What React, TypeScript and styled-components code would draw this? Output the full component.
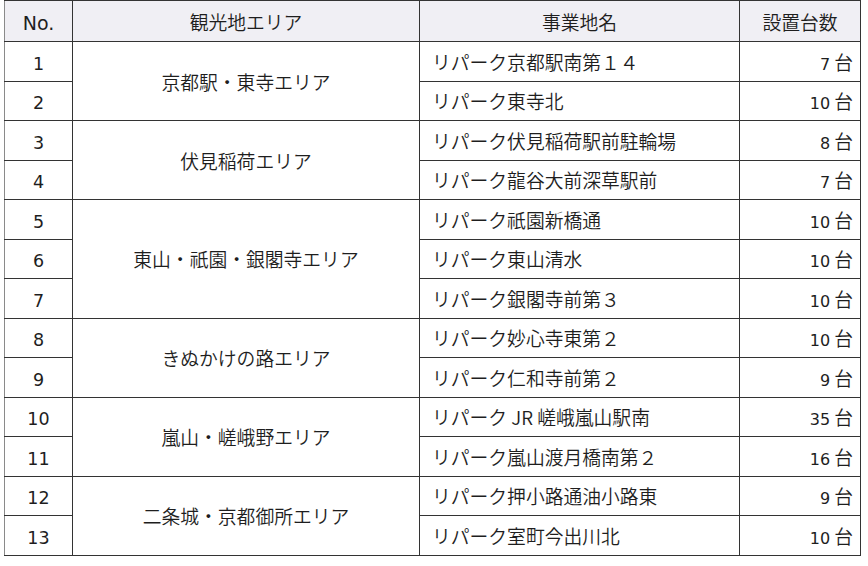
import React from 'react';
import styled, { createGlobalStyle } from 'styled-components';

const GlobalStyle = createGlobalStyle`
  html, body {
    margin: 0;
    padding: 0;
    background: #ffffff;
  }
  body {
    font-family: "Noto Sans CJK JP", sans-serif;
    color: #1e1e1e;
  }
`;

type Spot = { no: number; name: string; count: number };
type Area = { area: string; spots: Spot[] };

const areas: Area[] = [
  {
    area: '京都駅・東寺エリア',
    spots: [
      { no: 1, name: 'リパーク京都駅南第１４', count: 7 },
      { no: 2, name: 'リパーク東寺北', count: 10 },
    ],
  },
  {
    area: '伏見稲荷エリア',
    spots: [
      { no: 3, name: 'リパーク伏見稲荷駅前駐輪場', count: 8 },
      { no: 4, name: 'リパーク龍谷大前深草駅前', count: 7 },
    ],
  },
  {
    area: '東山・祇園・銀閣寺エリア',
    spots: [
      { no: 5, name: 'リパーク祇園新橋通', count: 10 },
      { no: 6, name: 'リパーク東山清水', count: 10 },
      { no: 7, name: 'リパーク銀閣寺前第３', count: 10 },
    ],
  },
  {
    area: 'きぬかけの路エリア',
    spots: [
      { no: 8, name: 'リパーク妙心寺東第２', count: 10 },
      { no: 9, name: 'リパーク仁和寺前第２', count: 9 },
    ],
  },
  {
    area: '嵐山・嵯峨野エリア',
    spots: [
      { no: 10, name: 'リパーク JR 嵯峨嵐山駅南', count: 35 },
      { no: 11, name: 'リパーク嵐山渡月橋南第２', count: 16 },
    ],
  },
  {
    area: '二条城・京都御所エリア',
    spots: [
      { no: 12, name: 'リパーク押小路通油小路東', count: 9 },
      { no: 13, name: 'リパーク室町今出川北', count: 10 },
    ],
  },
];

const Page = styled.div`
  padding: 0 0 0 4px;
`;

const Table = styled.table`
  border-collapse: collapse;
  table-layout: fixed;
  width: 856px;
  font-size: 18.8px;
  font-weight: 350;
`;

const HeadRow = styled.tr`
  height: 41px;
  background: #f0eff4;
`;

const HeadCell = styled.th`
  font-weight: 350;
  text-align: center;
  border: 1px solid #333;
  padding: 0;
  &:first-child {
    border-left-color: #8a8a8a;
  }
`;

const BodyRow = styled.tr`
  height: 39.5px;
`;

const Cell = styled.td<{ $align?: 'left' | 'center' | 'right' }>`
  border: 1px solid #333;
  padding: 0 ${(p) => (p.$align === 'right' ? '7px' : p.$align === 'left' ? '12px' : '0')};
  text-align: ${(p) => p.$align ?? 'center'};
  white-space: nowrap;
  &:first-child {
    border-left-color: #8a8a8a;
  }
`;

const Num = styled.span<{ $size: number }>`
  font-family: "DejaVu Sans", sans-serif;
  font-weight: 400;
  font-size: ${(p) => p.$size}px;
`;

const Unit = styled.span`
  margin-left: 4px;
`;

export default function App() {
  return (
    <Page>
      <GlobalStyle />
      <Table>
        <colgroup>
          <col style={{ width: 68 }} />
          <col style={{ width: 347 }} />
          <col style={{ width: 320 }} />
          <col style={{ width: 121 }} />
        </colgroup>
        <thead>
          <HeadRow>
            <HeadCell>
              <Num $size={19}>No.</Num>
            </HeadCell>
            <HeadCell>観光地エリア</HeadCell>
            <HeadCell>事業地名</HeadCell>
            <HeadCell>設置台数</HeadCell>
          </HeadRow>
        </thead>
        <tbody>
          {areas.map((a) =>
            a.spots.map((s, i) => (
              <BodyRow key={s.no}>
                <Cell>
                  <Num $size={17.5}>{s.no}</Num>
                </Cell>
                {i === 0 && <Cell rowSpan={a.spots.length}>{a.area}</Cell>}
                <Cell $align="left">{s.name}</Cell>
                <Cell $align="right">
                  <Num $size={16}>{s.count}</Num>
                  <Unit>台</Unit>
                </Cell>
              </BodyRow>
            )),
          )}
        </tbody>
      </Table>
    </Page>
  );
}
